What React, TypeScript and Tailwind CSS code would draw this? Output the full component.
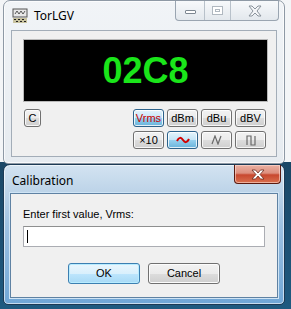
import React from 'react';

const font = { fontFamily: '"Liberation Sans", Arial, sans-serif' };
const titleFont = { fontFamily: '"Noto Sans", "Open Sans", sans-serif' };

const baseBtn =
  'flex h-[18px] items-center justify-center rounded-[3px] border text-[11px] leading-none shadow-[inset_0_0_0_1px_rgba(255,255,255,0.8)]';
const normalBtn =
  'border-[#707070] bg-[linear-gradient(to_bottom,#f2f2f2_0%,#ebebeb_50%,#dddddd_50%,#cfcfcf_100%)] text-black';
const pressedBtn =
  'border-[#2c628b] bg-[linear-gradient(to_bottom,#e5f4fc_0%,#c4e5f6_50%,#98d1ef_50%,#68b3db_100%)]';

const AppIcon: React.FC = () => (
  <svg width="16" height="16" viewBox="0 0 16 16">
    <rect x="1" y="1" width="14" height="8" fill="#e8e8e8" stroke="#555" />
    <path d="M3 6 L5 3 L7 6 L9 3 L11 6 L13 3" stroke="#333" fill="none" strokeWidth="0.8" />
    <rect x="1" y="10" width="14" height="5" fill="#c9c3a0" />
    <path d="M2 11h2v1H2zM6 11h2v1H6zM10 11h2v1h-2zM4 13h2v1H4zM8 13h2v1H8zM12 13h2v1h-2z" fill="#222" />
  </svg>
);

const CaptionButtons: React.FC = () => (
  <div className="flex h-[20px] self-start overflow-hidden rounded-b-[4px] border border-t-0 border-[#9aa5b1] bg-[linear-gradient(to_bottom,#f7f9fb,#e3e8ed)]">
    <div className="flex w-[29px] items-center justify-center border-r border-[#b8c1ca]">
      <div className="mt-[3px] h-[4px] w-[11px] rounded-[1px] border border-[#7d8791] bg-white" />
    </div>
    <div className="flex w-[26px] items-center justify-center border-r border-[#b8c1ca]">
      <div className="flex h-[9px] w-[11px] items-center justify-center border border-[#b0b8c0] bg-white">
        <div className="h-[3px] w-[5px] border border-[#b0b8c0]" />
      </div>
    </div>
    <div className="flex w-[47px] items-center justify-center">
      <svg width="14" height="12" viewBox="0 0 14 12">
        <path d="M1 1 L4 1 L7 4 L10 1 L13 1 L9 6 L13 11 L10 11 L7 8 L4 11 L1 11 L5 6 Z" fill="#f4f6f8" stroke="#8a939c" strokeWidth="1" />
      </svg>
    </div>
  </div>
);

const Tilde: React.FC = () => (
  <svg width="14" height="8" viewBox="0 0 14 8">
    <path d="M1 5 C3 1, 5 1, 7 4 C9 7, 11 7, 13 3" stroke="#d20000" strokeWidth="2" fill="none" />
  </svg>
);

const Triangle: React.FC = () => (
  <svg width="12" height="10" viewBox="0 0 12 10">
    <path d="M1 9 L4 1 L7 9 L10 1" stroke="#6a6a6a" strokeWidth="1.2" fill="none" />
  </svg>
);

const Square: React.FC = () => (
  <svg width="10" height="11" viewBox="0 0 10 11">
    <path d="M1 10 L1 1 L5 1 L5 10 L9 10 L9 1" stroke="#6a6a6a" strokeWidth="1.2" fill="none" />
  </svg>
);

const App: React.FC = () => {
  return (
    <div
      className="relative h-[309px] w-[291px] overflow-hidden bg-[linear-gradient(to_bottom,#f3f5f7_0px,#f3f5f7_162px,#1b4766_162px,#1f5a80_309px)]"
      style={font}
    >
      {/* main window (inactive) */}
      <div className="absolute left-[3px] top-0 flex h-[164px] w-[282px] flex-col rounded-t-[7px] rounded-b-[5px] border border-[#8e99a5] bg-[linear-gradient(to_bottom,#f1f4f7,#e6ebf0)] shadow-[inset_0_0_0_1px_rgba(255,255,255,0.7)]">
        <div className="flex h-[29px] items-start justify-between pl-[8px] pr-[5px]">
          <div className="flex items-center gap-[6px] pt-[6px]">
            <AppIcon />
            <span className="text-[12px] text-black" style={titleFont}>TorLGV</span>
          </div>
          <CaptionButtons />
        </div>
        <div className="mx-[7px] mb-[6px] flex flex-1 flex-col border border-[#a3adb8] bg-[#f0f0f0] pl-[11px] pr-[8px] pt-[8px]">
          <div className="flex h-[63px] items-center justify-center border border-[#b8b8b8] bg-black shadow-[inset_0_0_0_1px_#000]">
            <span className="text-[36px] font-bold leading-none text-[#1ae51a]">02C8</span>
          </div>
          <div className="mt-[7px] flex items-center justify-between pl-[1px] pr-[2px]">
            <div className={`${baseBtn} ${normalBtn} w-[17px]`}>C</div>
            <div className="flex gap-[3px]">
              <div className={`${baseBtn} ${pressedBtn} w-[31px] text-[#c80000]`}>Vrms</div>
              <div className={`${baseBtn} ${normalBtn} w-[31px]`}>dBm</div>
              <div className={`${baseBtn} ${normalBtn} w-[31px]`}>dBu</div>
              <div className={`${baseBtn} ${normalBtn} w-[31px]`}>dBV</div>
            </div>
          </div>
          <div className="mt-[4px] flex justify-end gap-[3px] pr-[2px]">
            <div className={`${baseBtn} ${normalBtn} w-[31px] text-[#444]`}>×10</div>
            <div className={`${baseBtn} ${pressedBtn} w-[31px]`}><Tilde /></div>
            <div className={`${baseBtn} ${normalBtn} w-[31px]`}><Triangle /></div>
            <div className={`${baseBtn} ${normalBtn} w-[31px]`}><Square /></div>
          </div>
        </div>
      </div>

      {/* calibration dialog (active) */}
      <div className="absolute left-[3px] top-[164px] flex h-[141px] w-[282px] flex-col rounded-t-[7px] rounded-b-[5px] border border-[#1d3a55] bg-[linear-gradient(to_bottom,#d3e3f1_0px,#bcd3e8_28px,#9fc2e2_60px,#6fa6d6_141px)] shadow-[inset_0_0_0_1px_rgba(255,255,255,0.6)]">
        <div className="flex h-[28px] items-start justify-between pl-[8px] pr-[3px]">
          <span className="pt-[7px] text-[12px] text-black" style={titleFont}>Calibration</span>
          <div className="flex h-[19px] w-[47px] items-center justify-center rounded-b-[4px] border border-t-0 border-[#5a1a10] bg-[linear-gradient(to_bottom,#eab1a4_0%,#dd8f7e_45%,#c8482f_55%,#d9704f_100%)] shadow-[inset_0_0_0_1px_rgba(255,220,210,0.6)]">
            <svg width="14" height="11" viewBox="0 0 14 11">
              <path d="M1 1 L4.5 1 L7 4 L9.5 1 L13 1 L9 5.5 L13 10 L9.5 10 L7 7 L4.5 10 L1 10 L5 5.5 Z" fill="#ffffff" stroke="#6b2a1e" strokeWidth="0.8" />
            </svg>
          </div>
        </div>
        <div className="mx-[6px] mb-[6px] flex flex-1 flex-col border border-[#5f82a3] bg-[#f0f0f0] px-[12px] shadow-[0_0_0_1px_#cfe4f5]">
          <div className="mt-[15px] text-[11px] leading-none text-black">Enter first value, Vrms:</div>
          <div className="mt-[6px] flex h-[21px] items-center border border-[#abadb3] border-t-[#8e8f8f] bg-white pl-[3px]">
            <div className="h-[13px] w-px bg-black" />
          </div>
          <div className="mt-[16px] flex justify-center gap-[8px]">
            <div className="flex h-[21px] w-[72px] items-center justify-center rounded-[3px] border border-[#3c7fb1] bg-[linear-gradient(to_bottom,#eaf6fd_0%,#d9f0fc_50%,#bee6fd_50%,#a7d9f5_100%)] text-[11px] shadow-[inset_0_0_0_1px_#b8ecff]">OK</div>
            <div className={`flex h-[21px] w-[72px] items-center justify-center rounded-[3px] border text-[11px] ${normalBtn} shadow-[inset_0_0_0_1px_#fcfcfc]`}>Cancel</div>
          </div>
        </div>
      </div>
    </div>
  );
};

export default App;
